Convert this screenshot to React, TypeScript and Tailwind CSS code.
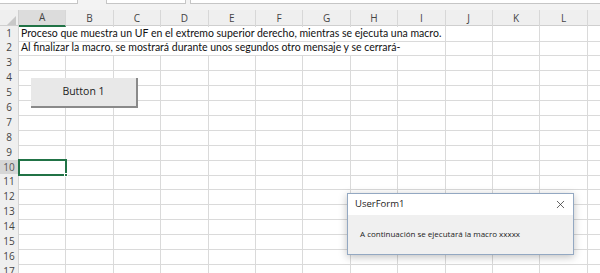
import { X } from 'lucide-react'

const cols = ['A', 'B', 'C', 'D', 'E', 'F', 'G', 'H', 'I', 'J', 'K', 'L', 'M']
const rows = Array.from({ length: 17 }, (_, i) => i + 1)

const texts: Record<number, string> = {
    1: 'Proceso que muestra un UF en el extremo superior derecho, mientras se ejecuta una macro.',
    2: 'Al finalizar la macro, se mostrará durante unos segundos otro mensaje y se cerrará-',
}

function Cell({ children, span, selected }: { children?: React.ReactNode; span?: boolean; selected?: boolean }) {
    return (
        <div
            className={`relative h-full border-r border-b border-[#dadada] ${span ? 'col-span-9' : ''} overflow-visible whitespace-nowrap pl-[2px] text-[10.5px] leading-[14px] text-[#111]`}
        >
            {children}
            {selected && (
                <div className="absolute -left-[1px] -top-[1px] w-[49px] h-[17px] border-2 border-[#217346] z-10">
                    <div className="absolute -right-[3px] -bottom-[3px] w-[4px] h-[4px] bg-[#217346] border border-white" />
                </div>
            )}
        </div>
    )
}

function Sheet() {
    return (
        <div className="grid" style={{ fontFamily: 'Lato, "Noto Sans", sans-serif' }}>
            <div className="grid grid-cols-[19px_repeat(12,47.4px)_40px] h-[15.5px] bg-[#efefef] border-b border-[#cfcfcf]">
                <div className="relative border-r border-[#cfcfcf]">
                    <div className="absolute right-[2px] bottom-[2px] w-0 h-0 border-l-[9px] border-l-transparent border-b-[9px] border-b-[#c8c8c8]" />
                </div>
                {cols.map((c) => (
                    <div
                        key={c}
                        className={`flex items-center justify-center border-r border-[#d7d7d7] text-[10px] text-[#444] ${c === 'A' ? 'bg-[#dcdcdc] border-b-2 border-b-[#217346]' : ''}`}
                        style={{ fontFamily: '"Open Sans", "Noto Sans", sans-serif' }}
                    >
                        {c === 'M' ? '' : c}
                    </div>
                ))}
            </div>
            {rows.map((r) => (
                <div key={r} className="grid grid-cols-[19px_repeat(12,47.4px)_40px] h-[14.9px]">
                    <div
                        className={`flex items-center justify-center border-r border-b border-[#d4d4d4] text-[10px] ${r === 10 ? 'bg-[#d6d6d6] text-[#555]' : 'bg-[#efefef] text-[#444]'}`}
                        style={{ fontFamily: '"Open Sans", "Noto Sans", sans-serif' }}
                    >
                        {r}
                    </div>
                    {texts[r] ? (
                        <>
                            <Cell span>{texts[r]}</Cell>
                            <Cell />
                            <Cell />
                            <Cell />
                            <Cell />
                        </>
                    ) : (
                        cols.map((c) => <Cell key={c} selected={r === 10 && c === 'A'} />)
                    )}
                </div>
            ))}
        </div>
    )
}

export default function App() {
    return (
        <div className="relative w-[600px] h-[273px] overflow-hidden bg-white">
            <div className="flex gap-[4px] h-[10px] bg-[#f3f3f3]">
                <div className="w-[78px] h-[4px] bg-white border-b border-r border-[#c6c6c6]" />
                <div className="w-[20px]" />
                <div className="w-[80px] h-[4px] bg-white border-b border-x border-[#c6c6c6]" />
                <div className="flex-1 h-[4px] bg-white border-b border-l border-[#c6c6c6]" />
            </div>
            <Sheet />

            <button
                className="absolute left-[31px] top-[78px] w-[107px] h-[30px] bg-[#e8e8e8] border-r-2 border-b-2 border-[#8a8a8a] text-[10.5px] text-[#222]"
                style={{ fontFamily: '"Open Sans", "Noto Sans", sans-serif' }}
            >
                Button 1
            </button>

            <div
                className="absolute left-[347px] top-[193px] w-[227px] h-[62px] border border-[#93a8c2] bg-[#f0f0f0] shadow-[0_2px_8px_rgba(0,0,0,0.25)] flex flex-col"
                style={{ fontFamily: '"Open Sans", "Noto Sans", sans-serif' }}
            >
                <div className="flex items-center justify-between h-[21px] bg-white pl-[7px] pr-[6px] text-[9.5px] text-[#222]">
                    <span>UserForm1</span>
                    <X className="w-[13px] h-[13px] text-[#333]" strokeWidth={1.4} />
                </div>
                <div className="flex-1 flex items-center pl-[12px] pb-[2px] text-[8px] text-[#222]">
                    A continuación se ejecutará la macro xxxxx
                </div>
            </div>
        </div>
    )
}
